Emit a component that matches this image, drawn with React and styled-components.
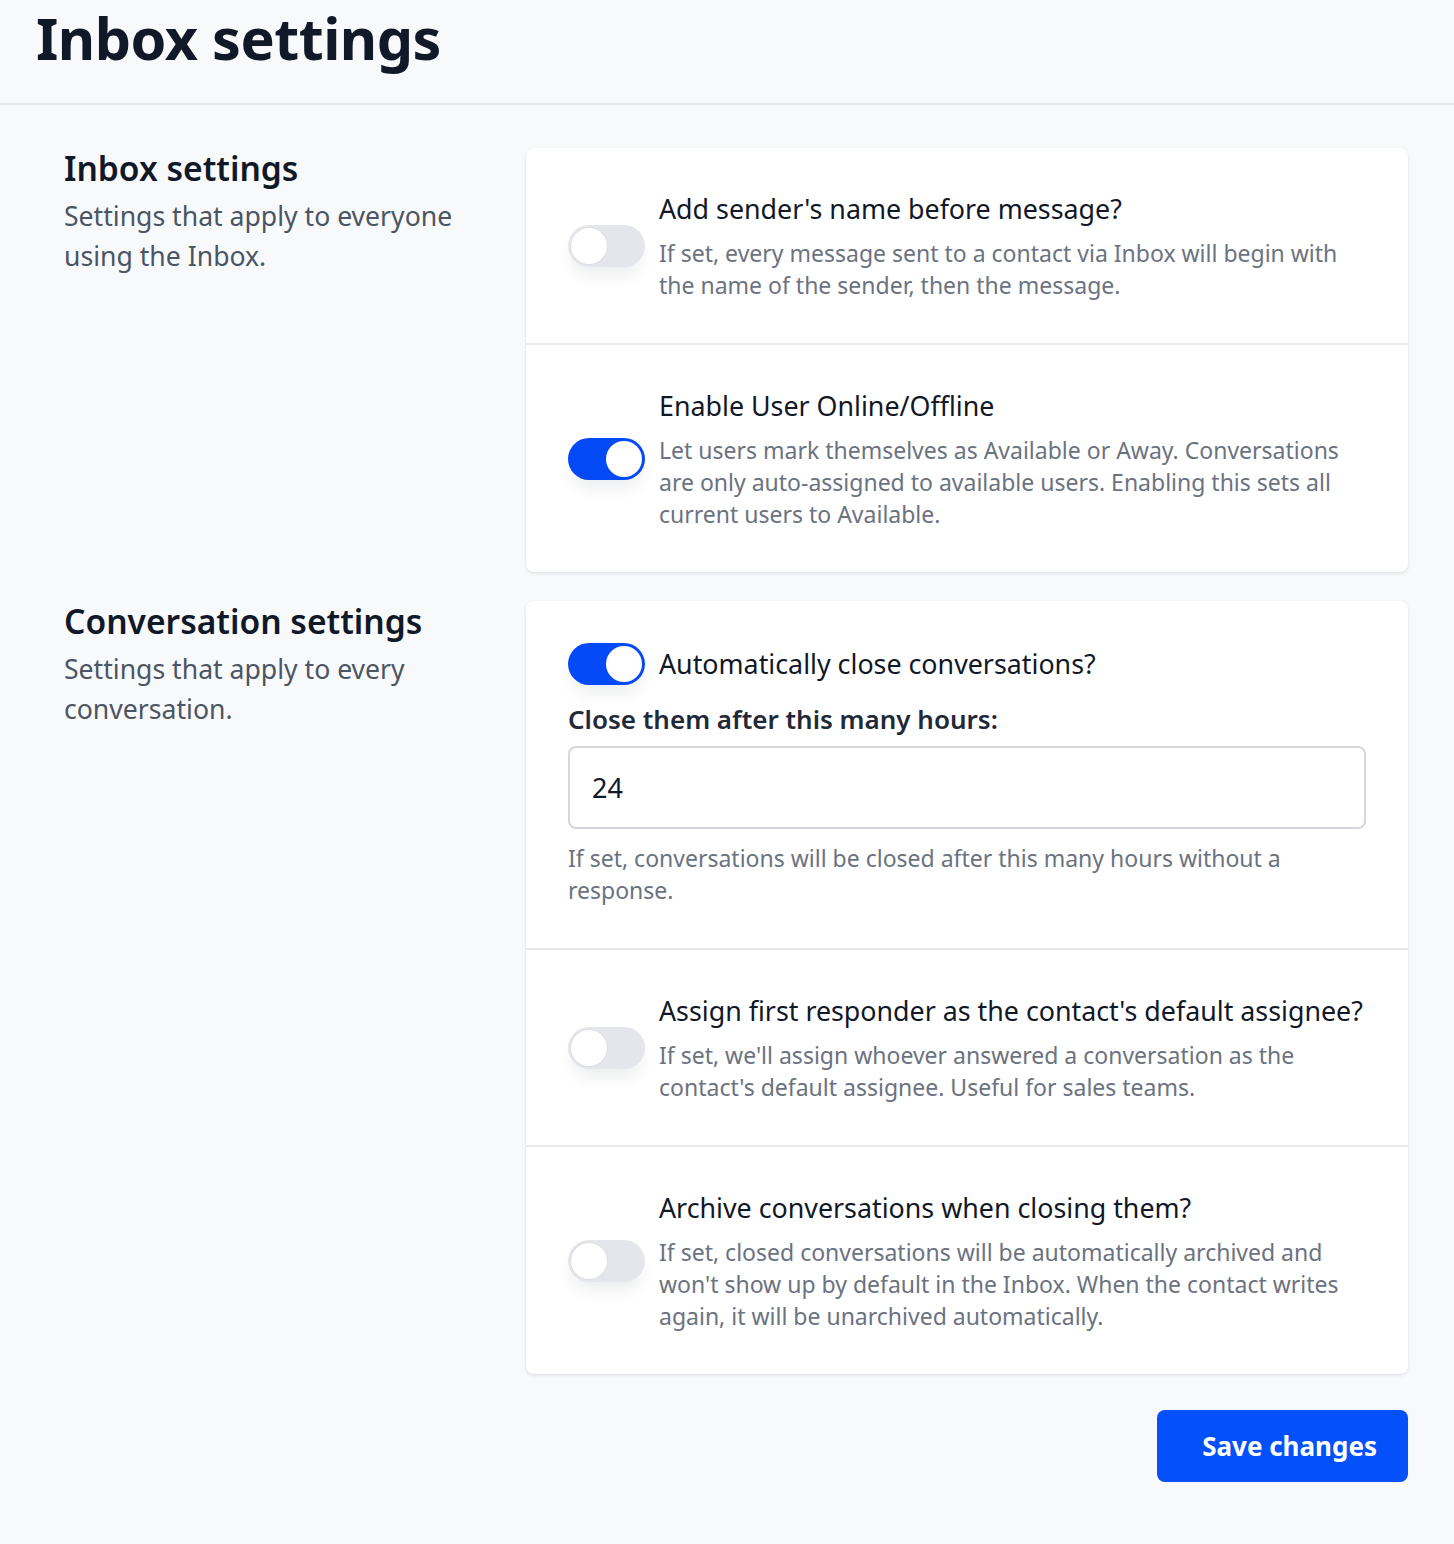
import React, { useState } from "react";
import styled, { createGlobalStyle, css } from "styled-components";

const GlobalStyle = createGlobalStyle`
  * {
    box-sizing: border-box;
  }

  body {
    margin: 0;
    background-color: #f8f9fb;
    font-family: "Noto Sans", "Open Sans", sans-serif;
    color: #111827;
  }
`;

const StyledPage = styled.div`
  min-height: 1544px;
  background-color: #f8f9fb;
`;

const StyledHeader = styled.header`
  height: 105px;
  padding: 0 36px;
  border-bottom: 2px solid #e5e7eb;

  .title_page {
    margin: 0;
    font-weight: 700;
    font-size: 57.5px;
    line-height: 76px;
    letter-spacing: -0.5px;
    color: #111827;
  }
`;

const StyledContent = styled.main`
  padding: 43px 46px 60px 64px;
`;

const StyledSection = styled.section`
  display: grid;
  grid-template-columns: 420px 1fr;
  column-gap: 42px;

  & + & {
    margin-top: 29px;
  }
`;

const StyledIntro = styled.div`
  .title_section {
    margin: 0 0 8px;
    font-weight: 600;
    font-size: 33.6px;
    line-height: 40px;
    color: #111827;
  }

  .text_section {
    margin: 0;
    font-size: 26.6px;
    line-height: 40px;
    color: #4b5563;
  }
`;

const StyledCard = styled.div`
  overflow: hidden;
  border-radius: 8px;
  background-color: #fff;
  box-shadow: 0 1px 3px rgba(17, 24, 39, 0.08), 0 2px 4px rgba(17, 24, 39, 0.04);
`;

const StyledRow = styled.div`
  padding: 43px 42px 42px;

  & + & {
    border-top: 2px solid #e9eaee;
  }

  ${(props) =>
    props.$inline &&
    css`
      display: flex;
      align-items: center;
      gap: 14px;
    `};
`;

const StyledToggleLine = styled.div`
  display: flex;
  align-items: center;
  gap: 14px;
  margin-top: -1px;
`;

const StyledToggle = styled.button`
  position: relative;
  flex: none;
  width: 77px;
  height: 42px;
  padding: 0;
  border: 0 none;
  border-radius: 21px;
  background-color: ${(props) => (props.$on ? "#0449f6" : "#e5e6eb")};
  box-shadow: 0 12px 16px -4px rgba(17, 24, 39, 0.08);
  cursor: pointer;

  &::after {
    content: "";
    position: absolute;
    top: 3px;
    left: ${(props) => (props.$on ? "38px" : "3px")};
    width: 36px;
    height: 36px;
    border-radius: 50%;
    background-color: #fff;
    box-shadow: ${(props) => (props.$on ? "none" : "0 0 0 1px #dcdde3")};
  }
`;

const StyledText = styled.div`
  .title_option {
    margin: 0;
    font-size: 26.8px;
    line-height: 36px;
    color: #111827;
  }

  .text_option {
    margin: 10px 0 0;
    font-size: 23px;
    line-height: 32px;
    color: #6b7280;
  }
`;

const StyledField = styled.div`
  margin-top: 16px;

  .label_field {
    display: block;
    font-weight: 600;
    font-size: 26px;
    line-height: 36px;
    color: #1f2937;
  }

  .textfield_local {
    display: block;
    width: 100%;
    height: 83px;
    margin-top: 9px;
    padding: 0 22px;
    border: 2px solid #d5d7dc;
    border-radius: 8px;
    background-color: #fff;
    font-family: inherit;
    font-size: 27px;
    color: #111827;
    outline: none;
  }

  .text_help {
    margin: 13px 0 0;
    padding-right: 60px;
    font-size: 23px;
    line-height: 32px;
    color: #6b7280;
  }
`;

const StyledFooter = styled.div`
  display: flex;
  justify-content: flex-end;
  margin-top: 36px;
`;

const StyledButtonSave = styled.button`
  height: 72px;
  padding: 0 31px 0 45px;
  border: 0 none;
  border-radius: 8px;
  background-color: #0450fa;
  font-family: inherit;
  font-weight: 700;
  font-size: 26px;
  color: #fff;
  cursor: pointer;
`;

const OptionRow = ({ title, text, on, onToggle }) => (
  <StyledRow $inline={true}>
    <StyledToggle type="button" $on={on} onClick={onToggle} aria-pressed={on} />
    <StyledText>
      <p className="title_option">{title}</p>
      <p className="text_option">{text}</p>
    </StyledText>
  </StyledRow>
);

const App = () => {
  const [settings, setSettings] = useState({
    senderName: false,
    online: true,
    autoClose: true,
    firstResponder: false,
    archive: false,
  });
  const [hours, setHours] = useState("24");

  const toggle = (key) => () =>
    setSettings((prev) => ({ ...prev, [key]: !prev[key] }));

  return (
    <StyledPage>
      <GlobalStyle />

      <StyledHeader>
        <h1 className="title_page">Inbox settings</h1>
      </StyledHeader>

      <StyledContent>
        <StyledSection>
          <StyledIntro>
            <h2 className="title_section">Inbox settings</h2>
            <p className="text_section">
              Settings that apply to everyone using the Inbox.
            </p>
          </StyledIntro>

          <StyledCard>
            <OptionRow
              title="Add sender's name before message?"
              text="If set, every message sent to a contact via Inbox will begin with the name of the sender, then the message."
              on={settings.senderName}
              onToggle={toggle("senderName")}
            />
            <OptionRow
              title="Enable User Online/Offline"
              text="Let users mark themselves as Available or Away. Conversations are only auto-assigned to available users. Enabling this sets all current users to Available."
              on={settings.online}
              onToggle={toggle("online")}
            />
          </StyledCard>
        </StyledSection>

        <StyledSection>
          <StyledIntro>
            <h2 className="title_section">Conversation settings</h2>
            <p className="text_section">
              Settings that apply to every conversation.
            </p>
          </StyledIntro>

          <StyledCard>
            <StyledRow>
              <StyledText>
                <StyledToggleLine>
                  <StyledToggle
                    type="button"
                    $on={settings.autoClose}
                    onClick={toggle("autoClose")}
                    aria-pressed={settings.autoClose}
                  />
                  <p className="title_option">Automatically close conversations?</p>
                </StyledToggleLine>
              </StyledText>

              <StyledField>
                <label className="label_field" htmlFor="hours">
                  Close them after this many hours:
                </label>
                <input
                  type="text"
                  id="hours"
                  className="textfield_local"
                  value={hours}
                  onChange={(e) => setHours(e.target.value)}
                />
                <p className="text_help">
                  If set, conversations will be closed after this many hours
                  without a response.
                </p>
              </StyledField>
            </StyledRow>

            <OptionRow
              title="Assign first responder as the contact's default assignee?"
              text="If set, we'll assign whoever answered a conversation as the contact's default assignee. Useful for sales teams."
              on={settings.firstResponder}
              onToggle={toggle("firstResponder")}
            />
            <OptionRow
              title="Archive conversations when closing them?"
              text="If set, closed conversations will be automatically archived and won't show up by default in the Inbox. When the contact writes again, it will be unarchived automatically."
              on={settings.archive}
              onToggle={toggle("archive")}
            />
          </StyledCard>
        </StyledSection>

        <StyledFooter>
          <StyledButtonSave type="button">Save changes</StyledButtonSave>
        </StyledFooter>
      </StyledContent>
    </StyledPage>
  );
};

export default App;
